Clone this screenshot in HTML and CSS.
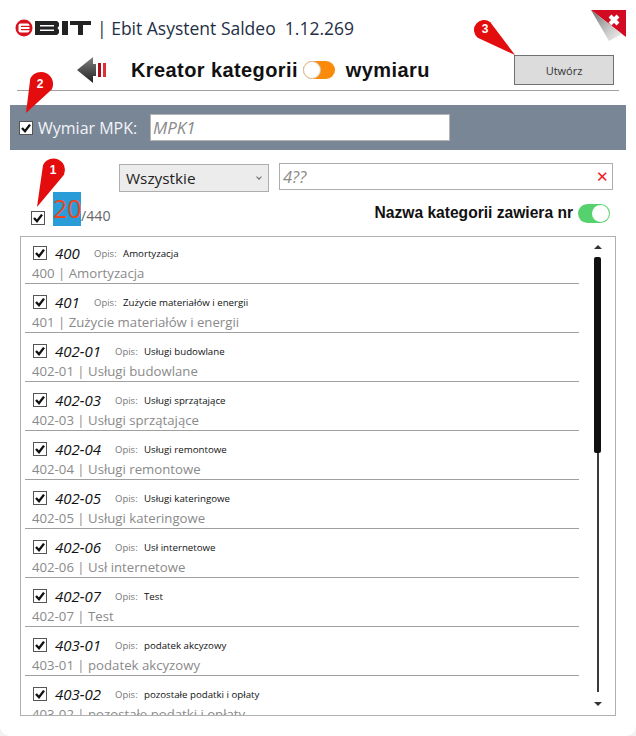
FILE: index.html
```html
<!DOCTYPE html>
<html lang="pl">
<head>
    <meta charset="UTF-8">
    <meta name="viewport" content="width=device-width, initial-scale=1.0">
    <title>Ebit Asystent Saldeo</title>
    <link rel="stylesheet" href="styles.css">
</head>
<body>
    <svg class="defs" width="0" height="0">
        <symbol id="tick" viewBox="0 0 14 14">
            <path d="M3 7 6 10.200 11 3.600" fill="none" stroke="#111" stroke-width="2.400"/>
        </symbol>
    </svg>

    <div class="window">
        <div class="title-row">
            <svg class="logo" width="77" height="18" viewBox="0 0 77 18">
                <circle cx="9" cy="9" r="8.500" fill="#d8121f"/>
                <rect x="3.500" y="4.500" width="11" height="9" rx="2" fill="#fff"/>
                <rect x="6" y="6.800" width="9" height="1.200" fill="#d8121f"/>
                <rect x="6" y="10" width="9" height="1.200" fill="#d8121f"/>
                <path d="M20 2H42L44 4V7L42.500 9 44 11V14L42 16H20ZM25 6V7.500H39V6ZM25 10.500V12H39V10.500Z" fill="#222" fill-rule="evenodd"/>
                <rect x="47" y="2" width="6" height="14" fill="#222"/>
                <path d="M55 2H76V6H68V16H63V6H55Z" fill="#222"/>
            </svg>
            <span class="title-text">| Ebit Asystent Saldeo&nbsp; 1.12.269</span>
        </div>

        <div class="wizard-row">
            <svg class="back" width="30" height="26" viewBox="0 0 30 26">
                <defs>
                    <linearGradient id="backGrad" x1="0" y1="0" x2="0" y2="1">
                        <stop offset="0" stop-color="#808080"/>
                        <stop offset="1" stop-color="#222"/>
                    </linearGradient>
                </defs>
                <path d="M0 13 16 0V7H19V19H16V26Z" fill="url(#backGrad)"/>
                <rect x="21" y="6" width="3" height="14" fill="#a80f1a"/>
                <rect x="26" y="6" width="3" height="14" fill="#dc3038"/>
            </svg>
            <h1 class="wizard-title">Kreator kategorii</h1>
            <span class="switch switch-orange"><span class="knob"></span></span>
            <h1 class="wizard-title second">wymiaru</h1>
            <button class="create-btn">Utwórz</button>
        </div>

        <div class="rule"></div>

        <div class="mpk-bar">
            <span class="check"><svg width="14" height="14"><use href="#tick"/></svg></span>
            <span class="mpk-label">Wymiar MPK:</span>
            <div class="mpk-input">MPK1</div>
        </div>

        <div class="filter-row">
            <div class="select">Wszystkie<span class="chevron"></span></div>
            <div class="search">4??<span class="clear">✕</span></div>
        </div>

        <div class="count-row">
            <span class="check"><svg width="14" height="14"><use href="#tick"/></svg></span>
            <span class="count-big">20</span><span class="count-total">/440</span>
            <span class="contains-label">Nazwa kategorii zawiera nr</span>
            <span class="switch switch-green"><span class="knob"></span></span>
        </div>

        <div class="list-box">
            <div class="list">
                <div class="item">
                    <div class="item-top"><span class="check"><svg width="14" height="14"><use href="#tick"/></svg></span><span class="code">400</span><span class="opis">Opis:</span><span class="desc">Amortyzacja</span></div>
                    <div class="item-name">400 | Amortyzacja</div>
                </div>
                <div class="item">
                    <div class="item-top"><span class="check"><svg width="14" height="14"><use href="#tick"/></svg></span><span class="code">401</span><span class="opis">Opis:</span><span class="desc">Zużycie materiałów i energii</span></div>
                    <div class="item-name">401 | Zużycie materiałów i energii</div>
                </div>
                <div class="item">
                    <div class="item-top"><span class="check"><svg width="14" height="14"><use href="#tick"/></svg></span><span class="code long">402-01</span><span class="opis">Opis:</span><span class="desc">Usługi budowlane</span></div>
                    <div class="item-name">402-01 | Usługi budowlane</div>
                </div>
                <div class="item">
                    <div class="item-top"><span class="check"><svg width="14" height="14"><use href="#tick"/></svg></span><span class="code long">402-03</span><span class="opis">Opis:</span><span class="desc">Usługi sprzątające</span></div>
                    <div class="item-name">402-03 | Usługi sprzątające</div>
                </div>
                <div class="item">
                    <div class="item-top"><span class="check"><svg width="14" height="14"><use href="#tick"/></svg></span><span class="code long">402-04</span><span class="opis">Opis:</span><span class="desc">Usługi remontowe</span></div>
                    <div class="item-name">402-04 | Usługi remontowe</div>
                </div>
                <div class="item">
                    <div class="item-top"><span class="check"><svg width="14" height="14"><use href="#tick"/></svg></span><span class="code long">402-05</span><span class="opis">Opis:</span><span class="desc">Usługi kateringowe</span></div>
                    <div class="item-name">402-05 | Usługi kateringowe</div>
                </div>
                <div class="item">
                    <div class="item-top"><span class="check"><svg width="14" height="14"><use href="#tick"/></svg></span><span class="code long">402-06</span><span class="opis">Opis:</span><span class="desc">Usł internetowe</span></div>
                    <div class="item-name">402-06 | Usł internetowe</div>
                </div>
                <div class="item">
                    <div class="item-top"><span class="check"><svg width="14" height="14"><use href="#tick"/></svg></span><span class="code long">402-07</span><span class="opis">Opis:</span><span class="desc">Test</span></div>
                    <div class="item-name">402-07 | Test</div>
                </div>
                <div class="item">
                    <div class="item-top"><span class="check"><svg width="14" height="14"><use href="#tick"/></svg></span><span class="code long">403-01</span><span class="opis">Opis:</span><span class="desc">podatek akcyzowy</span></div>
                    <div class="item-name">403-01 | podatek akcyzowy</div>
                </div>
                <div class="item">
                    <div class="item-top"><span class="check"><svg width="14" height="14"><use href="#tick"/></svg></span><span class="code long">403-02</span><span class="opis">Opis:</span><span class="desc">pozostałe podatki i opłaty</span></div>
                    <div class="item-name">403-02 | pozostałe podatki i opłaty</div>
                </div>
            </div>
            <div class="scrollbar">
                <span class="arrow-up"></span>
                <div class="track"><div class="thumb"></div></div>
                <span class="arrow-down"></span>
            </div>
        </div>

        <!-- numerki instrukcji, leza nad reszta -->
        <svg class="pin pin-1" width="40" height="60" viewBox="0 0 40 60">
            <path d="M7 57 13 15.300A11.500 11.500 0 1 1 34 24.700Z" fill="#e30d0d"/>
            <text x="23" y="24" class="pin-num">1</text>
        </svg>
        <svg class="pin pin-2" width="40" height="46" viewBox="0 0 40 46">
            <path d="M6 43 10.300 8.500A12 12 0 1 1 31.700 19.500Z" fill="#e30d0d"/>
            <text x="20" y="18" class="pin-num">2</text>
        </svg>
        <svg class="pin pin-3" width="48" height="42" viewBox="0 0 48 42">
            <path d="M45 40 7.700 22.800A10 10 0 1 1 20.300 7.200Z" fill="#e30d0d"/>
            <text x="15" y="18" class="pin-num">3</text>
        </svg>

        <svg class="close" width="35" height="35" viewBox="0 0 35 35">
            <defs>
                <linearGradient id="curlGrad" x1="0" y1="0" x2="1" y2="1">
                    <stop offset="0" stop-color="#6e6e6e"/>
                    <stop offset="0.600" stop-color="#c8c8c8"/>
                    <stop offset="1" stop-color="#f2f2f2"/>
                </linearGradient>
            </defs>
            <path d="M0 0H35V27L31 24Z" fill="#d20a22"/>
            <path d="M0 0 31 24 18 31Z" fill="url(#curlGrad)"/>
            <path d="M19 6 27 14M27 6 19 14" stroke="#fff" stroke-width="4"/>
        </svg>
    </div>
</body>
</html>
```

FILE: styles.css
```css
* {
    box-sizing: border-box;
}
html, body {
    margin: 0;
    padding: 0;
    background-color: #f2f2f2;
}
.defs {
    display: block;
    height: 0;
}
.window {
    position: relative;
    width: 636px;
    height: 736px;
    background-color: #fff;
    border-radius: 0 0 10px 10px;
    overflow: hidden;
    font-family: "Open Sans", sans-serif;
}

/* Naglowek */
.title-row {
    display: flex;
    align-items: center;
    gap: 5px;
    height: 56px;
    padding: 0 0 0 15px;
    color: #1f2f46;
}
.logo {
    flex: none;
}
.title-text {
    font-size: 17.500px;
    white-space: pre;
}
.wizard-row {
    display: flex;
    align-items: center;
    height: 34px;
    padding: 0 22px 6px 77px;
}
.back {
    flex: none;
}
.wizard-title {
    margin: 0 0 0 24px;
    font-family: "Liberation Sans", Arial, sans-serif;
    font-size: 20px;
    letter-spacing: 0.4px;
    font-weight: bold;
    color: #111;
    white-space: nowrap;
}
.wizard-title.second {
    margin-left: 11px;
}
.switch {
    flex: none;
    position: relative;
    display: inline-block;
    border-radius: 10px;
}
.switch .knob {
    position: absolute;
    top: 1px;
    background-color: #fff;
    border-radius: 50%;
}
.switch-orange {
    width: 32px;
    height: 18px;
    margin-left: 5px;
    background-color: #f98a0a;
}
.switch-orange .knob {
    left: 0;
    top: 0;
    width: 18px;
    height: 18px;
    border: 1px solid #d9c2a8;
}
.switch-green {
    width: 32px;
    height: 19px;
    margin-left: 5px;
    background-color: #55d16d;
}
.switch-green .knob {
    right: 1px;
    width: 17px;
    height: 17px;
}
.create-btn {
    margin-left: auto;
    width: 100px;
    height: 30px;
    background-color: #dcdcdc;
    border: 1px solid #707070;
    border-radius: 0;
    font-family: "Open Sans", sans-serif;
    font-size: 11px;
    color: #333;
}
.rule {
    height: 1px;
    margin: 0 17px;
    background-color: #a0a0a0;
}

/* Pasek MPK */
.mpk-bar {
    display: flex;
    align-items: center;
    height: 45px;
    margin: 14px 10px 0;
    padding-left: 9px;
    background-color: #788696;
}
.mpk-label {
    margin-left: 5px;
    font-size: 16px;
    color: #f2f4f6;
    width: 112px;
    white-space: nowrap;
}
.mpk-input {
    width: 300px;
    height: 27px;
    padding: 0 2px;
    line-height: 25px;
    background-color: #fff;
    border: 1px solid #b5b5b5;
    font-size: 17px;
    font-style: italic;
    color: #8a8a8a;
}
.check {
    flex: none;
    display: inline-block;
    width: 14px;
    height: 14px;
    background-color: #fff;
    border: 1px solid #555;
}
.check svg {
    display: block;
    margin: -1px;
}

/* Filtry */
.filter-row {
    display: flex;
    align-items: flex-start;
    gap: 10px;
    padding: 13px 23px 0 119px;
}
.select {
    position: relative;
    width: 150px;
    height: 28px;
    margin-top: 1px;
    padding-left: 6px;
    line-height: 26px;
    background-color: #ececec;
    border: 1px solid #adadad;
    font-size: 15.300px;
    color: #222;
}
.chevron {
    position: absolute;
    right: 7px;
    top: 10px;
    width: 4px;
    height: 4px;
    border-right: 1px solid #666;
    border-bottom: 1px solid #666;
    transform: rotate(45deg);
}
.search {
    display: flex;
    justify-content: space-between;
    width: 334px;
    height: 27px;
    padding: 0 3px;
    line-height: 25px;
    border: 1px solid #adadad;
    font-size: 16.500px;
    font-style: italic;
    color: #8a8a8a;
}
.clear {
    font-style: normal;
    font-size: 15px;
    color: #f01a1a;
}
.count-row {
    display: flex;
    align-items: flex-end;
    height: 35px;
    margin-top: -1px;
    padding: 0 26px 0 31px;
}
.count-row .check {
    margin-bottom: 1px;
}
.count-big {
    width: 28px;
    height: 34px;
    margin-left: 8px;
    background-color: #2a9dd8;
    font-size: 25px;
    line-height: 32px;
    color: #f2441d;
    white-space: nowrap;
}
.count-total {
    font-size: 14.200px;
    line-height: 18px;
    margin-bottom: 1px;
    color: #666;
}
.contains-label {
    margin-left: auto;
    font-family: "Liberation Sans", Arial, sans-serif;
    font-size: 15.600px;
    font-weight: bold;
    color: #111;
    margin-bottom: 4px;
}
.count-row .switch {
    margin-bottom: 3px;
}

/* Lista */
.list-box {
    position: relative;
    width: 596px;
    height: 480px;
    margin: 10px 0 0 20px;
    border: 1px solid #b0b0b0;
    overflow: hidden;
}
.list {
    width: 554px;
    margin: -2px 0 0 4px;
}
.item {
    height: 49px;
    padding: 9px 0 0 8px;
    border-bottom: 1px solid #a0a0a0;
}
.item:last-child {
    border-bottom: none;
}
.item-top {
    display: flex;
    align-items: center;
    height: 18px;
}
.code {
    width: 39px;
    margin-left: 8px;
    font-size: 15px;
    font-style: italic;
    color: #111;
}
.code.long {
    width: 60px;
}
.opis {
    font-size: 9.500px;
    color: #777;
    width: 28px;
}
.desc {
    margin-left: 1px;
    font-size: 9.700px;
    color: #111;
}
.item-name {
    margin: 2px 0 0 -1px;
    font-size: 13.200px;
    line-height: 18px;
    color: #8a8a8a;
    white-space: nowrap;
}

/* Pasek przewijania */
.scrollbar {
    position: absolute;
    top: 0;
    right: 0;
    bottom: 0;
    width: 34px;
    display: flex;
    flex-direction: column;
    align-items: center;
}
.arrow-up {
    margin-top: 8px;
    border: 4px solid transparent;
    border-top: none;
    border-bottom: 4px solid #333;
}
.track {
    width: 2px;
    height: 435px;
    margin-top: 8px;
    background-color: #3a3a3a;
    position: relative;
}
.thumb {
    position: absolute;
    top: 0;
    left: -3px;
    width: 7px;
    height: 196px;
    background-color: #111;
    border-radius: 2px;
}
.arrow-down {
    margin-top: 10px;
    border: 4px solid transparent;
    border-bottom: none;
    border-top: 4px solid #333;
}

/* Elementy nad trescia */
.pin {
    position: absolute;
}
.pin-1 {
    left: 30px;
    top: 150px;
}
.pin-2 {
    left: 20px;
    top: 70px;
}
.pin-3 {
    left: 470px;
    top: 15px;
}
.pin-num {
    font-family: "Liberation Sans", Arial, sans-serif;
    font-size: 12px;
    font-weight: bold;
    fill: #fff;
    text-anchor: middle;
}
.close {
    position: absolute;
    top: 10px;
    right: 10px;
}
```
